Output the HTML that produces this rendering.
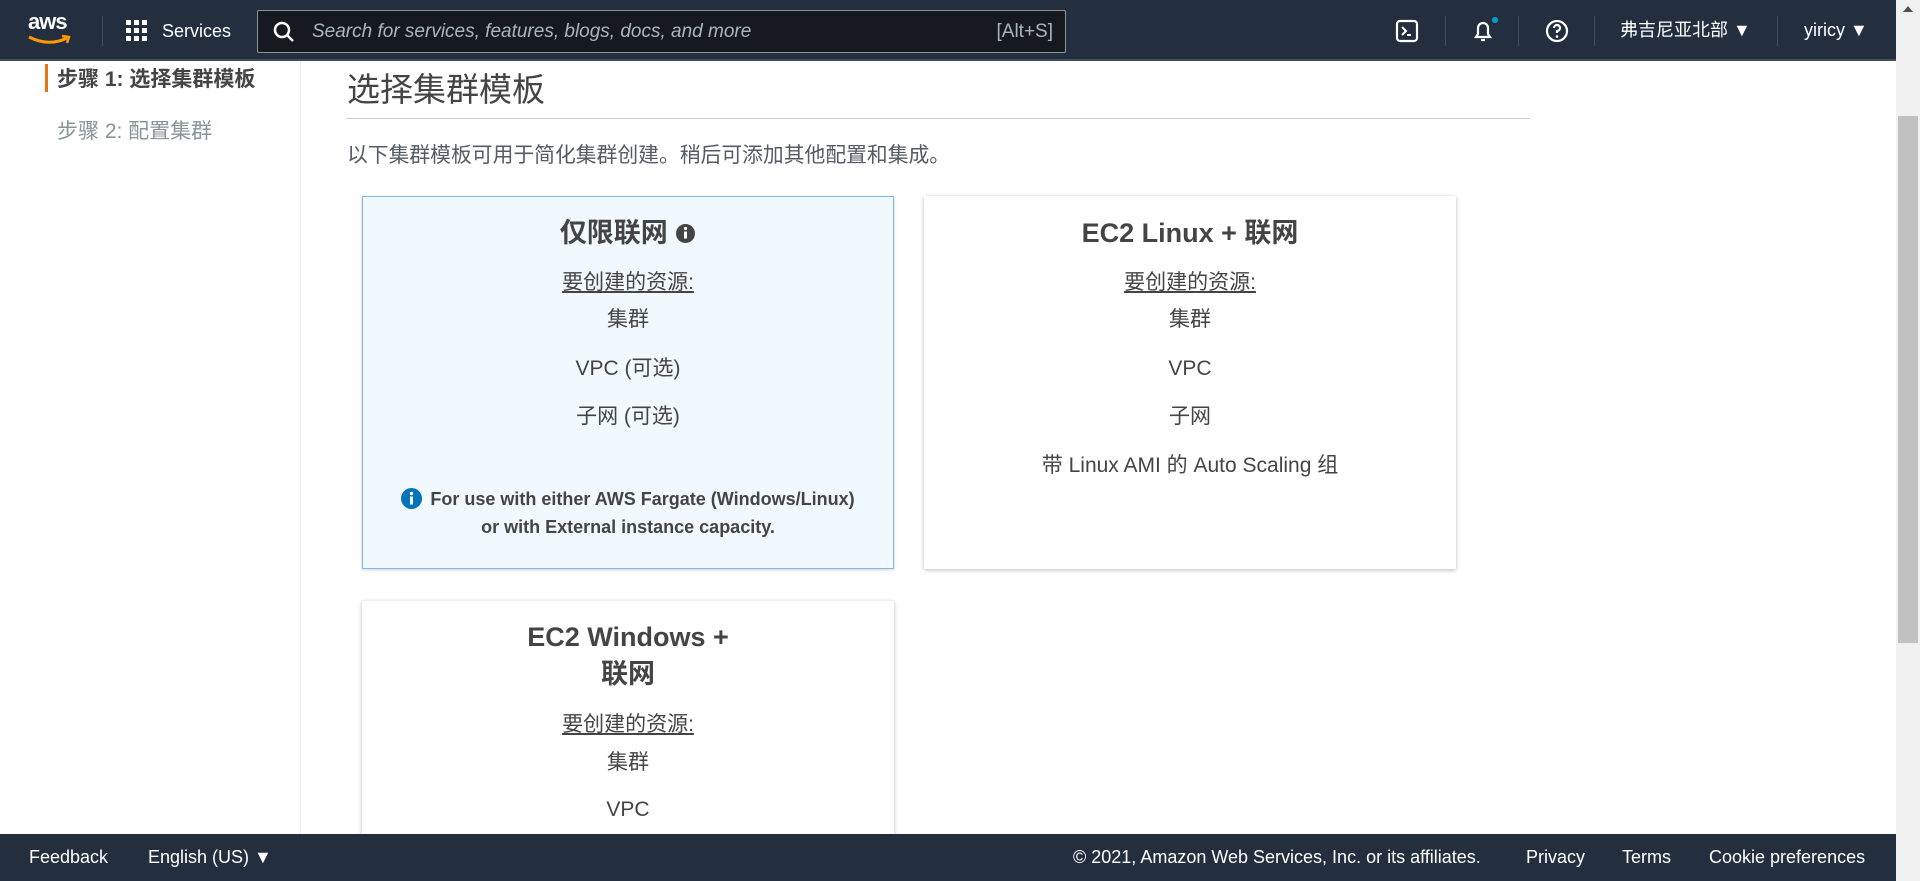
<!DOCTYPE html>
<html><head><meta charset="utf-8"><style>
*{box-sizing:border-box;margin:0;padding:0}
body{width:1920px;height:881px;overflow:hidden;background:#fff;font-family:"Liberation Sans","Noto Sans CJK SC",sans-serif;color:#444;position:relative}
.hdr{position:absolute;left:0;top:0;width:1896px;height:61px;background:#232f3e;border-bottom:2px solid #414d5c}
.a{position:absolute;white-space:nowrap}
.w{color:#fff;font-size:18px;line-height:22px}
.div{position:absolute;top:16px;width:1px;height:30px;background:#414d5c}
.search{position:absolute;left:257px;top:10px;width:809px;height:43px;background:#16191f;border:1px solid #879596;border-radius:2px}
.ft{position:absolute;left:0;top:834px;width:1896px;height:47px;background:#232f3e}
.ft .a{color:#fff;font-size:18px;top:13px}
.sb{position:absolute;left:1896px;top:0;width:24px;height:881px;background:#f1f1f1}
.nav{position:absolute;left:300px;top:61px;width:1px;height:773px;background:#eaeded}
.card{position:absolute;width:532px;background:#fff;box-shadow:0 1px 4px rgba(0,28,36,.3);text-align:center}
.card.sel{background:#f1f8fe;border:1px solid #80b7ea;box-shadow:0 1px 3px rgba(0,28,36,.2)}
.t{position:absolute;left:0;width:100%;text-align:center;font-size:21px;line-height:26px;color:#444}
.h{font-weight:bold;font-size:27px;line-height:34px;color:#444}
.u{text-decoration:underline}
</style></head><body>
<div class="hdr">
 <div class="a" style="left:28px;top:9px;color:#fff;font-size:22px;font-weight:bold;letter-spacing:-1px">aws</div>
 <svg class="a" style="left:27px;top:34px" width="46" height="14"><path d="M2 3 Q22 13 40 4" stroke="#ff9900" stroke-width="3" fill="none"/><path d="M35 2 L42 3 L40 9" stroke="#ff9900" stroke-width="2.5" fill="none"/></svg>
 <div class="div" style="left:102px"></div>
 <svg class="a" style="left:126px;top:20px" width="22" height="22" fill="#fff"><rect x="0" y="0" width="5" height="5"/><rect x="8" y="0" width="5" height="5"/><rect x="16" y="0" width="5" height="5"/><rect x="0" y="8" width="5" height="5"/><rect x="8" y="8" width="5" height="5"/><rect x="16" y="8" width="5" height="5"/><rect x="0" y="16" width="5" height="5"/><rect x="8" y="16" width="5" height="5"/><rect x="16" y="16" width="5" height="5"/></svg>
 <div class="a w" style="left:162px;top:20px">Services</div>
 <div class="search">
  <svg class="a" style="left:15px;top:10px" width="22" height="22"><circle cx="9" cy="9" r="7" stroke="#fff" stroke-width="2.5" fill="none"/><path d="M14 14 L20 20" stroke="#fff" stroke-width="2.5"/></svg>
  <div class="a" style="left:54px;top:10px;font-size:19px;font-style:italic;color:#aab7b8">Search for services, features, blogs, docs, and more</div>
  <div class="a" style="right:12px;top:10px;font-size:19px;color:#aab7b8">[Alt+S]</div>
 </div>
 <svg class="a" style="left:1395px;top:19px" width="24" height="24"><rect x="2" y="2" width="20" height="20" rx="3" stroke="#fff" stroke-width="2.2" fill="none"/><path d="M7 8 L11 12 L7 16 M12 16 H16" stroke="#fff" stroke-width="2" fill="none"/></svg>
 <div class="div" style="left:1445px"></div>
 <svg class="a" style="left:1470px;top:17px" width="30" height="28"><path d="M6 20 H20 L18 17 V11 A5 5 0 0 0 8 11 V17 Z" stroke="#fff" stroke-width="2.2" fill="none"/><path d="M11 23 H15" stroke="#fff" stroke-width="2.2"/><circle cx="25" cy="3" r="3" fill="#00a1c9"/></svg>
 <div class="div" style="left:1518px"></div>
 <svg class="a" style="left:1545px;top:19px" width="24" height="24"><circle cx="12" cy="12" r="10" stroke="#fff" stroke-width="2.2" fill="none"/><path d="M9 9 A3 3 0 1 1 12 12 V14" stroke="#fff" stroke-width="2.2" fill="none"/><circle cx="12" cy="17.5" r="1.3" fill="#fff"/></svg>
 <div class="div" style="left:1594px"></div>
 <div class="a w" style="left:1620px;top:19px">弗吉尼亚北部 ▼</div>
 <div class="div" style="left:1777px"></div>
 <div class="a w" style="left:1804px;top:19px">yiricy ▼</div>
</div>
<div class="a" style="left:45px;top:64px;width:3px;height:28px;background:#ec7211"></div>
<div class="a" style="left:57px;top:67px;font-size:21px;line-height:26px;font-weight:bold;color:#444">步骤 1: 选择集群模板</div>
<div class="a" style="left:57px;top:119px;font-size:21px;line-height:26px;color:#879596">步骤 2: 配置集群</div>
<div class="nav"></div>
<div class="a" style="left:347px;top:70px;font-size:33px;line-height:40px;color:#444">选择集群模板</div>
<div class="a" style="left:347px;top:118px;width:1183px;height:1px;background:#cccccc"></div>
<div class="a" style="left:347px;top:143px;font-size:20.8px;line-height:26px;color:#545b64">以下集群模板可用于简化集群创建。稍后可添加其他配置和集成。</div>

<div class="card sel" style="left:362px;top:196px;height:373px">
 <div class="t h" style="top:19px">仅限联网 <svg width="21" height="21" style="vertical-align:-2px"><circle cx="10.5" cy="10.5" r="9.5" fill="#444"/><rect x="9" y="8.5" width="3" height="7" fill="#fff"/><circle cx="10.5" cy="5.5" r="1.6" fill="#fff"/></svg></div>
 <div class="t u" style="top:73px">要创建的资源:</div>
 <div class="t" style="top:110px">集群</div>
 <div class="t" style="top:159px">VPC (可选)</div>
 <div class="t" style="top:207px">子网 (可选)</div>
 <div class="t" style="top:288px;font-size:18px;font-weight:bold;line-height:28px"><svg width="21" height="21" style="vertical-align:-4px;margin-right:8px"><circle cx="10.5" cy="10.5" r="10.5" fill="#0073bb"/><rect x="9" y="8.5" width="3" height="8" fill="#fff"/><circle cx="10.5" cy="5.5" r="1.7" fill="#fff"/></svg>For use with either AWS Fargate (Windows/Linux)<br>or with External instance capacity.</div>
</div>

<div class="card" style="left:924px;top:196px;height:373px">
 <div class="t h" style="top:20px">EC2 Linux + 联网</div>
 <div class="t u" style="top:74px">要创建的资源:</div>
 <div class="t" style="top:111px">集群</div>
 <div class="t" style="top:160px">VPC</div>
 <div class="t" style="top:208px">子网</div>
 <div class="t" style="top:257px">带 Linux AMI 的 Auto Scaling 组</div>
</div>

<div class="card" style="left:362px;top:601px;height:260px">
 <div class="t h" style="top:18px;line-height:37px">EC2 Windows +<br>联网</div>
 <div class="t u" style="top:111px">要创建的资源:</div>
 <div class="t" style="top:149px">集群</div>
 <div class="t" style="top:196px">VPC</div>
</div>

<div class="ft">
 <div class="a" style="left:29px">Feedback</div>
 <div class="a" style="left:148px">English (US) ▼</div>
 <div class="a" style="left:1073px">© 2021, Amazon Web Services, Inc. or its affiliates.</div>
 <div class="a" style="left:1526px">Privacy</div>
 <div class="a" style="left:1622px">Terms</div>
 <div class="a" style="left:1709px">Cookie preferences</div>
</div>
<div class="sb">
 <div class="a" style="left:7px;top:6px;width:0;height:0;border-left:5px solid transparent;border-right:5px solid transparent;border-bottom:6px solid #505050"></div>
 <div class="a" style="left:2px;top:116px;width:20px;height:527px;background:#c1c1c1"></div>
</div>
</body></html>
